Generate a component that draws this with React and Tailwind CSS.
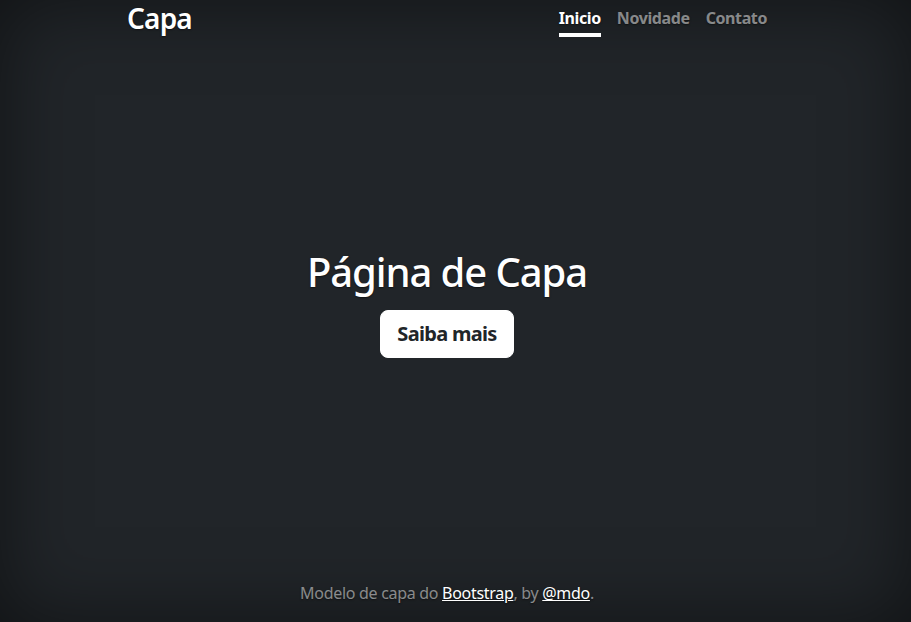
export default function App() {
  const ts = "[text-shadow:0_0.05rem_0.1rem_rgba(0,0,0,0.5)]";
  return (
    <div
      className={`h-[622px] w-full overflow-hidden bg-[#212529] text-white shadow-[inset_0_0_5rem_rgba(0,0,0,0.5)] ${ts}`}
      style={{ fontFamily: '"Noto Sans", "Open Sans", sans-serif' }}
    >
      <div className="ml-[127px] flex h-full w-[640px] flex-col">
        <header className="flex items-start justify-between pt-[2px]">
          <h3 className="m-0 text-[28px] font-semibold leading-[1.2] tracking-[-0.8px]">Capa</h3>
          <nav className="flex gap-4 pt-[4px] text-[16px] font-bold leading-6 tracking-[-0.4px]">
            <a className="border-b-4 border-white pb-[3px] text-white">Inicio</a>
            <a className="border-b-4 border-transparent pb-[3px] text-white/50">Novidade</a>
            <a className="border-b-4 border-transparent pb-[3px] text-white/50">Contato</a>
          </nav>
        </header>
        <main className="flex flex-1 flex-col items-center justify-center pb-[12px]">
          <h1 className="mb-[14px] text-[40px] font-medium leading-[1.2] tracking-[-1.1px]">Página de Capa</h1>
          <button className="h-12 rounded-lg border border-white bg-white px-4 text-[20px] font-bold leading-[1.5] tracking-[-0.7px] text-[#212529] [text-shadow:none]">
            Saiba mais
          </button>
        </main>
        <footer className="pb-[17px] text-center text-[16px] leading-6 tracking-[-0.3px] text-white/50">
          Modelo de capa do <a className="text-white underline">Bootstrap</a>, by{" "}
          <a className="text-white underline">@mdo</a>.
        </footer>
      </div>
    </div>
  );
}
